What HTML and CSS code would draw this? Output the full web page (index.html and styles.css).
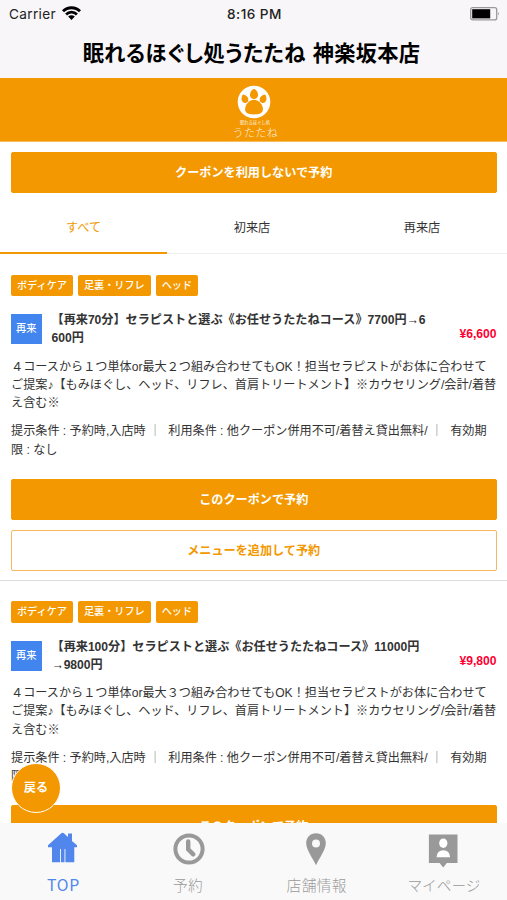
FILE: index.html
```html
<!DOCTYPE html>
<html lang="ja">
<head>
<meta charset="utf-8">
<title>眠れるほぐし処うたたね 神楽坂本店</title>
<link rel="stylesheet" href="styles.css">
</head>
<body>
<div class="app">
  <header class="header">
    <div class="status">
      <div class="carrier">Carrier
        <svg class="wifi" viewBox="0 0 19 14"><path d="M0 4.2A13.4 13.4 0 0 1 19 4.2L17 6.3A10.6 10.6 0 0 0 2 6.3ZM3.1 7.4A9 9 0 0 1 15.9 7.4L13.9 9.4A6.3 6.3 0 0 0 5.1 9.4ZM6.2 10.5A4.7 4.7 0 0 1 12.8 10.5L9.5 13.9Z"/></svg>
      </div>
      <div class="time">8:16 PM</div>
      <svg class="battery" viewBox="0 0 30 14"><rect x=".7" y=".7" width="26" height="12.2" rx="2" fill="none" stroke="#999" stroke-width="1.3"/><rect x="2.2" y="2.2" width="18" height="9.2" fill="#000"/><path d="M28 5Q29.8 6.8 28 8.6Z" fill="#888"/></svg>
    </div>
    <h1 class="title">眠れるほぐし処うたたね 神楽坂本店</h1>
  </header>
  <div class="banner">
    <svg class="paw" viewBox="0 0 34 34"><circle cx="17" cy="17" r="16.3" fill="#fff"/><g fill="#f39800"><path d="M17 3.8C19.3 4.7 21.2 7.4 21 10.2C20.8 12.6 19.2 14 17 14S13.2 12.6 13 10.2C12.8 7.4 14.7 4.7 17 3.8Z"/><path d="M5.8 9.6C8.6 9.8 10.9 11.6 11.3 14C11.6 16.3 10.4 17.8 8.6 18C6.4 18.2 4.8 16.6 4.6 14.2C4.5 12.5 5 10.7 5.8 9.6Z"/><path d="M28.2 9.6C25.4 9.8 23.1 11.6 22.7 14C22.4 16.3 23.6 17.8 25.4 18C27.6 18.2 29.2 16.6 29.4 14.2C29.5 12.5 29 10.7 28.2 9.6Z"/><path d="M17 14.8C22 14.8 25.9 20 25.9 24.2C25.9 27.8 22.8 29.4 17 29.4S8.1 27.8 8.1 24.2C8.1 20 12 14.8 17 14.8Z"/></g></svg>
    <svg class="logo-text" viewBox="0 0 60 20"><text x="30" y="4.9" class="logo-small">眠れるほぐし処</text><text x="30.3" y="18" class="logo-name">うたたね</text></svg>
  </div>
  <main class="content">
    <div class="top-action"><a class="btn">クーポンを利用しないで予約</a></div>
    <nav class="tabs"><a class="tab active">すべて</a><a class="tab">初来店</a><a class="tab">再来店</a></nav>

    <article class="coupon">
      <div class="tags"><span class="tag">ボディケア</span><span class="tag">足裏・リフレ</span><span class="tag">ヘッド</span></div>
      <div class="summary">
        <span class="badge">再来</span>
        <h2 class="name">【再来70分】セラピストと選ぶ《お任せうたたねコース》7700円→6<br>600円</h2>
        <span class="price">¥6,600</span>
      </div>
      <p class="text">４コースから１つ単体or最大２つ組み合わせてもOK！担当セラピストがお体に合わせて<br>ご提案♪【もみほぐし、ヘッド、リフレ、首肩トリートメント】※カウセリング/会計/着替<br>え含む※</p>
      <p class="text">提示条件 : 予約時,入店時<span class="bar">｜</span>利用条件 : 他クーポン併用不可/着替え貸出無料/<span class="bar">｜</span>有効期<br>限 : なし</p>
      <div class="actions"><a class="btn">このクーポンで予約</a><a class="btn outline">メニューを追加して予約</a></div>
    </article>

    <article class="coupon">
      <div class="tags"><span class="tag">ボディケア</span><span class="tag">足裏・リフレ</span><span class="tag">ヘッド</span></div>
      <div class="summary">
        <span class="badge">再来</span>
        <h2 class="name">【再来100分】セラピストと選ぶ《お任せうたたねコース》11000円<br>→9800円</h2>
        <span class="price">¥9,800</span>
      </div>
      <p class="text">４コースから１つ単体or最大３つ組み合わせてもOK！担当セラピストがお体に合わせて<br>ご提案♪【もみほぐし、ヘッド、リフレ、首肩トリートメント】※カウセリング/会計/着替<br>え含む※</p>
      <p class="text">提示条件 : 予約時,入店時<span class="bar">｜</span>利用条件 : 他クーポン併用不可/着替え貸出無料/<span class="bar">｜</span>有効期<br>限 : なし</p>
      <div class="actions"><a class="btn">このクーポンで予約</a></div>
    </article>
  </main>
  <a class="back">戻る</a>
  <footer class="tabbar">
    <a class="item current"><svg viewBox="0 0 36 36"><path d="M3 15.2L16 3.4Q17.600 2 19.200 3.400L23 7V3.500H27V11L32 15.200V17.200H29.300V32.300H20.400V19H19.500V32.300H15.900V19H15V32.300H7V17.200H3Z"/></svg><span>TOP</span></a>
    <a class="item"><svg viewBox="0 0 36 36"><circle cx="18" cy="19" r="13.6" fill="none" stroke="#999" stroke-width="4"/><path d="M17.2 11.5V19.4L22.3 24.3" fill="none" stroke="#999" stroke-width="4.4" stroke-linecap="round"/></svg><span>予約</span></a>
    <a class="item"><svg viewBox="0 0 36 36"><path fill-rule="evenodd" d="M18 3.2C23.6 3.2 27.8 7.4 27.8 13C27.8 20 21.5 27.5 18 35.2C14.5 27.5 8.2 20 8.2 13C8.2 7.4 12.4 3.2 18 3.2ZM18 9.6A4 4 0 1 0 18 17.6A4 4 0 0 0 18 9.6Z"/></svg><span>店舗情報</span></a>
    <a class="item"><svg viewBox="0 0 36 36"><path d="M3.9 4.4H32.5V33H21.8L18.2 37.6L14.6 33H3.9Z"/><ellipse cx="18.3" cy="13.2" rx="4.1" ry="4.8" fill="#fff"/><path d="M11.5 27.3Q12 20.2 18.3 20.2T25.1 27.3Z" fill="#fff"/></svg><span>マイページ</span></a>
  </footer>
</div>
</body>
</html>
```
FILE: styles.css
```css
* { box-sizing: border-box; }
body { margin: 0; background: #fff; color: #333; font: 12.13px/18.2px "Liberation Sans", "Noto Sans CJK JP", sans-serif; }
h1, h2, p { margin: 0; }
.app { position: relative; height: 900px; overflow: hidden; display: flex; flex-direction: column; }

.header { flex: none; height: 78px; background: #f8f6f8; }
.status { display: grid; grid-template-columns: 1fr auto 1fr; align-items: center; height: 28px; padding: 0 7px 0 9px; font: 500 13.6px/28px Inter, sans-serif; color: #222; }
.carrier { display: flex; align-items: center; gap: 6px; font-weight: 400; letter-spacing: .35px; }
.wifi { width: 19px; height: 14px; fill: #000; margin-top: -2px; }
.time { letter-spacing: .45px; }
.battery { width: 30px; height: 14px; justify-self: end; }
.title { height: 48px; padding-right: 4px; text-align: center; color: #000; font: 700 21.2px/47px "Noto Sans CJK JP", sans-serif; font-feature-settings: "palt"; letter-spacing: .35px; word-spacing: 2px; white-space: nowrap; }

.banner { flex: none; height: 64px; padding-top: 7px; background: #f39800; border-bottom: 1px solid #f8bd5c; display: flex; flex-direction: column; align-items: center; }
.paw { width: 34px; height: 34px; }
.logo-text { width: 60px; height: 20px; margin-left: 2px; fill: #fff; text-anchor: middle; }
.logo-small { font: 500 4.3px "Noto Sans CJK JP", sans-serif; opacity: .75; }
.logo-name { font: 300 11px "Noto Sans CJK JP", sans-serif; letter-spacing: .4px; opacity: .85; }

.content { flex: 1; min-height: 0; overflow: hidden; }
.top-action { padding: 10px 10.5px 0 11px; }
.btn { display: flex; align-items: center; justify-content: center; height: 41px; padding-top: 2px; background: #f39800; border: 1px solid #f39800; border-radius: 2px; color: #fff; font-weight: 700; }
.btn.outline { background: #fff; color: #f39800; border-color: #f5b75f; }
.tabs { display: grid; grid-template-columns: 167px 170px 170px; height: 61px; border-bottom: 1px solid #eee; }
.tab { display: flex; align-items: center; justify-content: center; height: 61px; border-bottom: 2px solid transparent; padding-top: 12px; }
.tab.active { color: #f39800; border-color: #f39800; }

.coupon { height: 326.7px; padding: 20.5px 10.5px 0 11px; border-bottom: 1px solid #ddd; white-space: nowrap; }
.tags { display: flex; gap: 5px; height: 21.5px; }
.tag { padding: 0 6px; border-radius: 2px; background: #f39800; color: #fff; font-size: 10.15px; line-height: 21px; font-weight: 500; }
.summary { display: grid; grid-template-columns: 30.5px 1fr auto; column-gap: 10px; align-items: center; margin-top: 15px; }
.badge { height: 30.5px; background: #4285ee; color: #fff; font-size: 10.2px; line-height: 30px; text-align: center; font-weight: 500; }
.name { font-size: 12.13px; font-weight: 700; }
.price { color: #ff0033; font-weight: 700; margin-top: 10px; }
.text { margin-top: 10.2px; }
.bar { color: #777; margin-right: 7.2px; margin-left: 3.2px; }
.actions { display: grid; gap: 10px; margin-top: 20px; }

.back { position: absolute; left: 11px; top: 762.5px; width: 50px; height: 50px; border: 1px solid #fff; border-radius: 50%; background: #f39800; color: #fff; font-weight: 700; line-height: 49px; text-align: center; }

.tabbar { flex: none; height: 77.5px; background: #faf9f9; display: grid; grid-template-columns: 125px repeat(3, 127.2px); padding-top: 7px; }
.item { display: flex; flex-direction: column; align-items: center; color: #999; font: 300 14.7px/20px "Noto Sans CJK JP", sans-serif; }
.item svg { width: 36px; height: 36px; fill: #999; overflow: visible; }
.item span { margin-top: 9px; margin-left: 2px; letter-spacing: .4px; }
.item:last-child span { letter-spacing: 0; }
.item:nth-child(2) span { margin-left: 0; margin-right: 1px; }
.item.current { color: #5187ec; }
.item.current span { font-size: 15.8px; font-weight: 400; letter-spacing: .7px; }
.item.current svg { fill: #5187ec; }
```
